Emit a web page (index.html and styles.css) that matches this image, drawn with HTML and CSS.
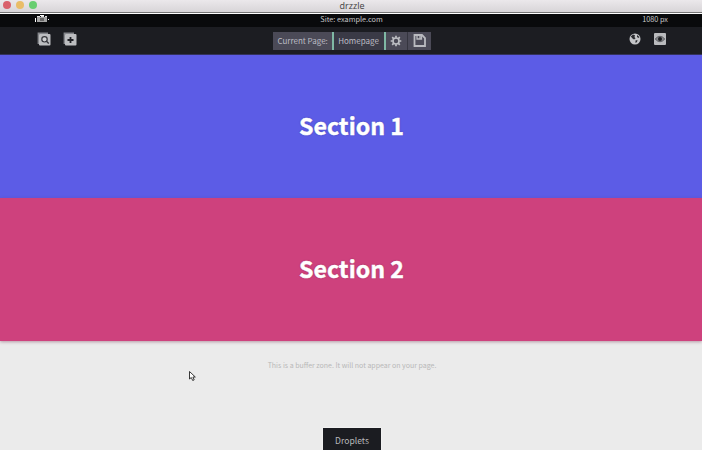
FILE: index.html
```html
<!DOCTYPE html>
<html lang="en">
<head>
<meta charset="utf-8">
<title>drzzle</title>
<link rel="stylesheet" href="styles.css">
</head>
<body>
<div class="window">
  <header class="titlebar">
    <div class="lights"><i class="red"></i><i class="yellow"></i><i class="green"></i></div>
    <span class="title">drzzle</span>
  </header>
  <div class="sitebar">
    <svg class="camera" width="14" height="8" viewBox="0 0 14 8"><path d="M5 .5h4M.5 3v4M13.500 4v1" stroke="#fff"/><rect x="2" y="2" width="10" height="5" fill="#a4a4a4"/><rect x="5" y="3" width="4" height="3" fill="#666"/><path d="M2 1.500h10" stroke="#ddd" stroke-dasharray="3 1"/></svg>
    <span class="domain">Site: example.com</span>
    <span class="account">1080 px</span>
  </div>
  <nav class="toolbar">
    <div class="tools left">
      <svg width="14" height="14" viewBox="0 0 14 14"><path d="M1.500 12V1.500H11" fill="none" stroke="#85878c" stroke-width="1.800"/><rect x="2" y="2" width="11.500" height="11.500" rx="1" fill="#bcbdc0"/><circle cx="7.500" cy="7.300" r="2.700" fill="#cfd0d2" stroke="#36373c" stroke-width="1.200"/><path d="m9.500 9.300 2.300 2.300" stroke="#36373c" stroke-width="1.400"/></svg>
      <svg width="14" height="14" viewBox="0 0 14 14"><path d="M1.500 12V1.500H11" fill="none" stroke="#85878c" stroke-width="1.800"/><rect x="2" y="2" width="11.500" height="11.500" rx="1" fill="#bcbdc0"/><path d="M7.500 5v6M4.500 8h6" stroke="#202126" stroke-width="1.800"/></svg>
    </div>
    <div class="page-picker">
      <span class="label">Current Page:</span>
      <span class="current">Homepage</span>
      <button class="gear" aria-label="Settings"><svg width="12" height="12" viewBox="0 0 12 12"><circle cx="6" cy="6" r="3" fill="none" stroke="#bfc0c5" stroke-width="1.600"/><path d="M6 .7v2M6 9.300v2M.7 6h2M9.300 6h2M2.200 2.200l1.400 1.400M8.400 8.400l1.400 1.400M2.200 9.800l1.400-1.400M8.400 3.600l1.400-1.400" stroke="#bfc0c5" stroke-width="1.700"/></svg></button>
      <button class="save" aria-label="Save"><svg width="13" height="13" viewBox="0 0 13 13"><path d="M1.500 1h7.500l3 3v8H1.500z" fill="none" stroke="#b9babf" stroke-width="1.800"/><path d="M4 1.500v3.500h4.500v-3.500M7 1.500v3" fill="none" stroke="#b9babf" stroke-width="1.300"/></svg></button>
    </div>
    <div class="tools right">
      <svg width="12" height="12" viewBox="0 0 12 12"><circle cx="6" cy="6" r="5.500" fill="#c4c5c8"/><path d="M1.800 3.500 4 1.500 6 2.200 5.500 4 6.500 5.500 5 6.500 3.500 5.500zM8 2l2.500 2L9.500 5 8 4zM6.500 7.500 8.500 7 8 9 6.500 10z" fill="#2b2c30"/></svg>
      <svg width="12" height="12" viewBox="0 0 12 12"><rect width="12" height="12" rx="1" fill="#b9babd"/><path d="M1.200 6q4.800-5.500 9.600 0-4.800 5.500-9.600 0z" fill="#86878b" stroke="#4a4b50" stroke-width=".8"/><circle cx="6" cy="6" r="2" fill="#1c1d21"/></svg>
    </div>
  </nav>
  <main>
    <section class="section one"><h1>Section 1</h1></section>
    <section class="section two"><h1>Section 2</h1></section>
    <div class="buffer"><p>This is a buffer zone. It will not appear on your page.</p><button class="droplets">Droplets</button></div>
  </main>
  <svg class="cursor" width="7" height="10" viewBox="0 0 7 10"><path d="M.5.5v7.500l1.800-1.500 1.400 3 1.500-.7-1.300-2.800h2.400z" fill="#fff" stroke="#222" stroke-width=".9"/></svg>
</div>
</body>
</html>
```

FILE: styles.css
```css
* { box-sizing: border-box; }
body { margin: 0; font-family: "Noto Sans CJK JP", "Noto Sans", sans-serif; }
.window { position: relative; width: 702px; height: 450px; overflow: hidden; display: flex; flex-direction: column; background: #ebebeb; }
.titlebar { height: 13px; display: grid; grid-template-columns: 1fr auto 1fr; padding-left: 2px; background: linear-gradient(#ebe8eb, #d8d5d8 12px, #777 12px, #777); }
.lights { display: flex; gap: 5px; padding: 1px 0 0 1px; }
.lights i { width: 8px; height: 8px; border-radius: 50%; }
.red { background: #d9606b; }
.yellow { background: #e9bd68; }
.green { background: #68ce70; }
.title { font: 9px/11px "Open Sans", sans-serif; color: #403e40; }
.sitebar { height: 14px; border-top: 1px solid #fff; background: #090a0c; color: #c8c8c8; display: grid; grid-template-columns: 1fr auto 1fr; padding: 0 34px 0 35px; font-size: 7.3px; line-height: 11px; }
.camera { margin-top: 1px; }
.account { text-align: right; }
.toolbar { height: 28px; background: #1c1d22; border-bottom: 1px solid #33325e; display: grid; grid-template-columns: 1fr auto 1fr; align-items: center; padding: 0 36px 0 37px; }
.tools { display: flex; align-items: center; margin-top: -3px; }
.left { gap: 12px; }
.right { gap: 13px; justify-content: flex-end; }
.page-picker { display: flex; height: 18px; color: #bcbcc4; font-size: 8px; line-height: 18px; }
.label { width: 59px; padding-left: 5px; background: #4b4a57; }
.current { width: 54px; text-align: center; background: #3a3a46; border: solid #7fb8a4; border-width: 0 2px; }
.page-picker button { border: 0; padding: 0; background: #4b4a57; display: grid; place-items: center; }
.gear { width: 21px; }
.page-picker .save { width: 24px; border-left: 1px solid #35353f; }
.section { height: 143px; display: flex; align-items: center; justify-content: center; padding: 0 0 3px 1px; }
.one { background: #5c5ce6; }
.two { background: #ce417d; box-shadow: 0 1px 3px rgba(120, 50, 80, .45); position: relative; }
h1 { margin: 0; color: #fff; font-size: 23.2px; line-height: 34px; font-weight: 700; -webkit-text-stroke: .4px #fff; text-shadow: 0 0 2px rgba(0, 0, 0, .3); }
.buffer { height: 109px; display: flex; flex-direction: column; align-items: center; justify-content: space-between; padding: 17px 0 0 2px; }
.buffer p { margin: 0; color: #b8b8b8; font-size: 7px; line-height: 14px; }
.droplets { width: 58px; height: 22px; border: 0; padding: 2px 0 0; background: #1b1c21; color: #b8b8bb; font: 8.6px/20px "Noto Sans CJK JP", sans-serif; box-shadow: 0 0 2px #fff; }
.cursor { position: absolute; left: 189px; top: 371px; }
```
